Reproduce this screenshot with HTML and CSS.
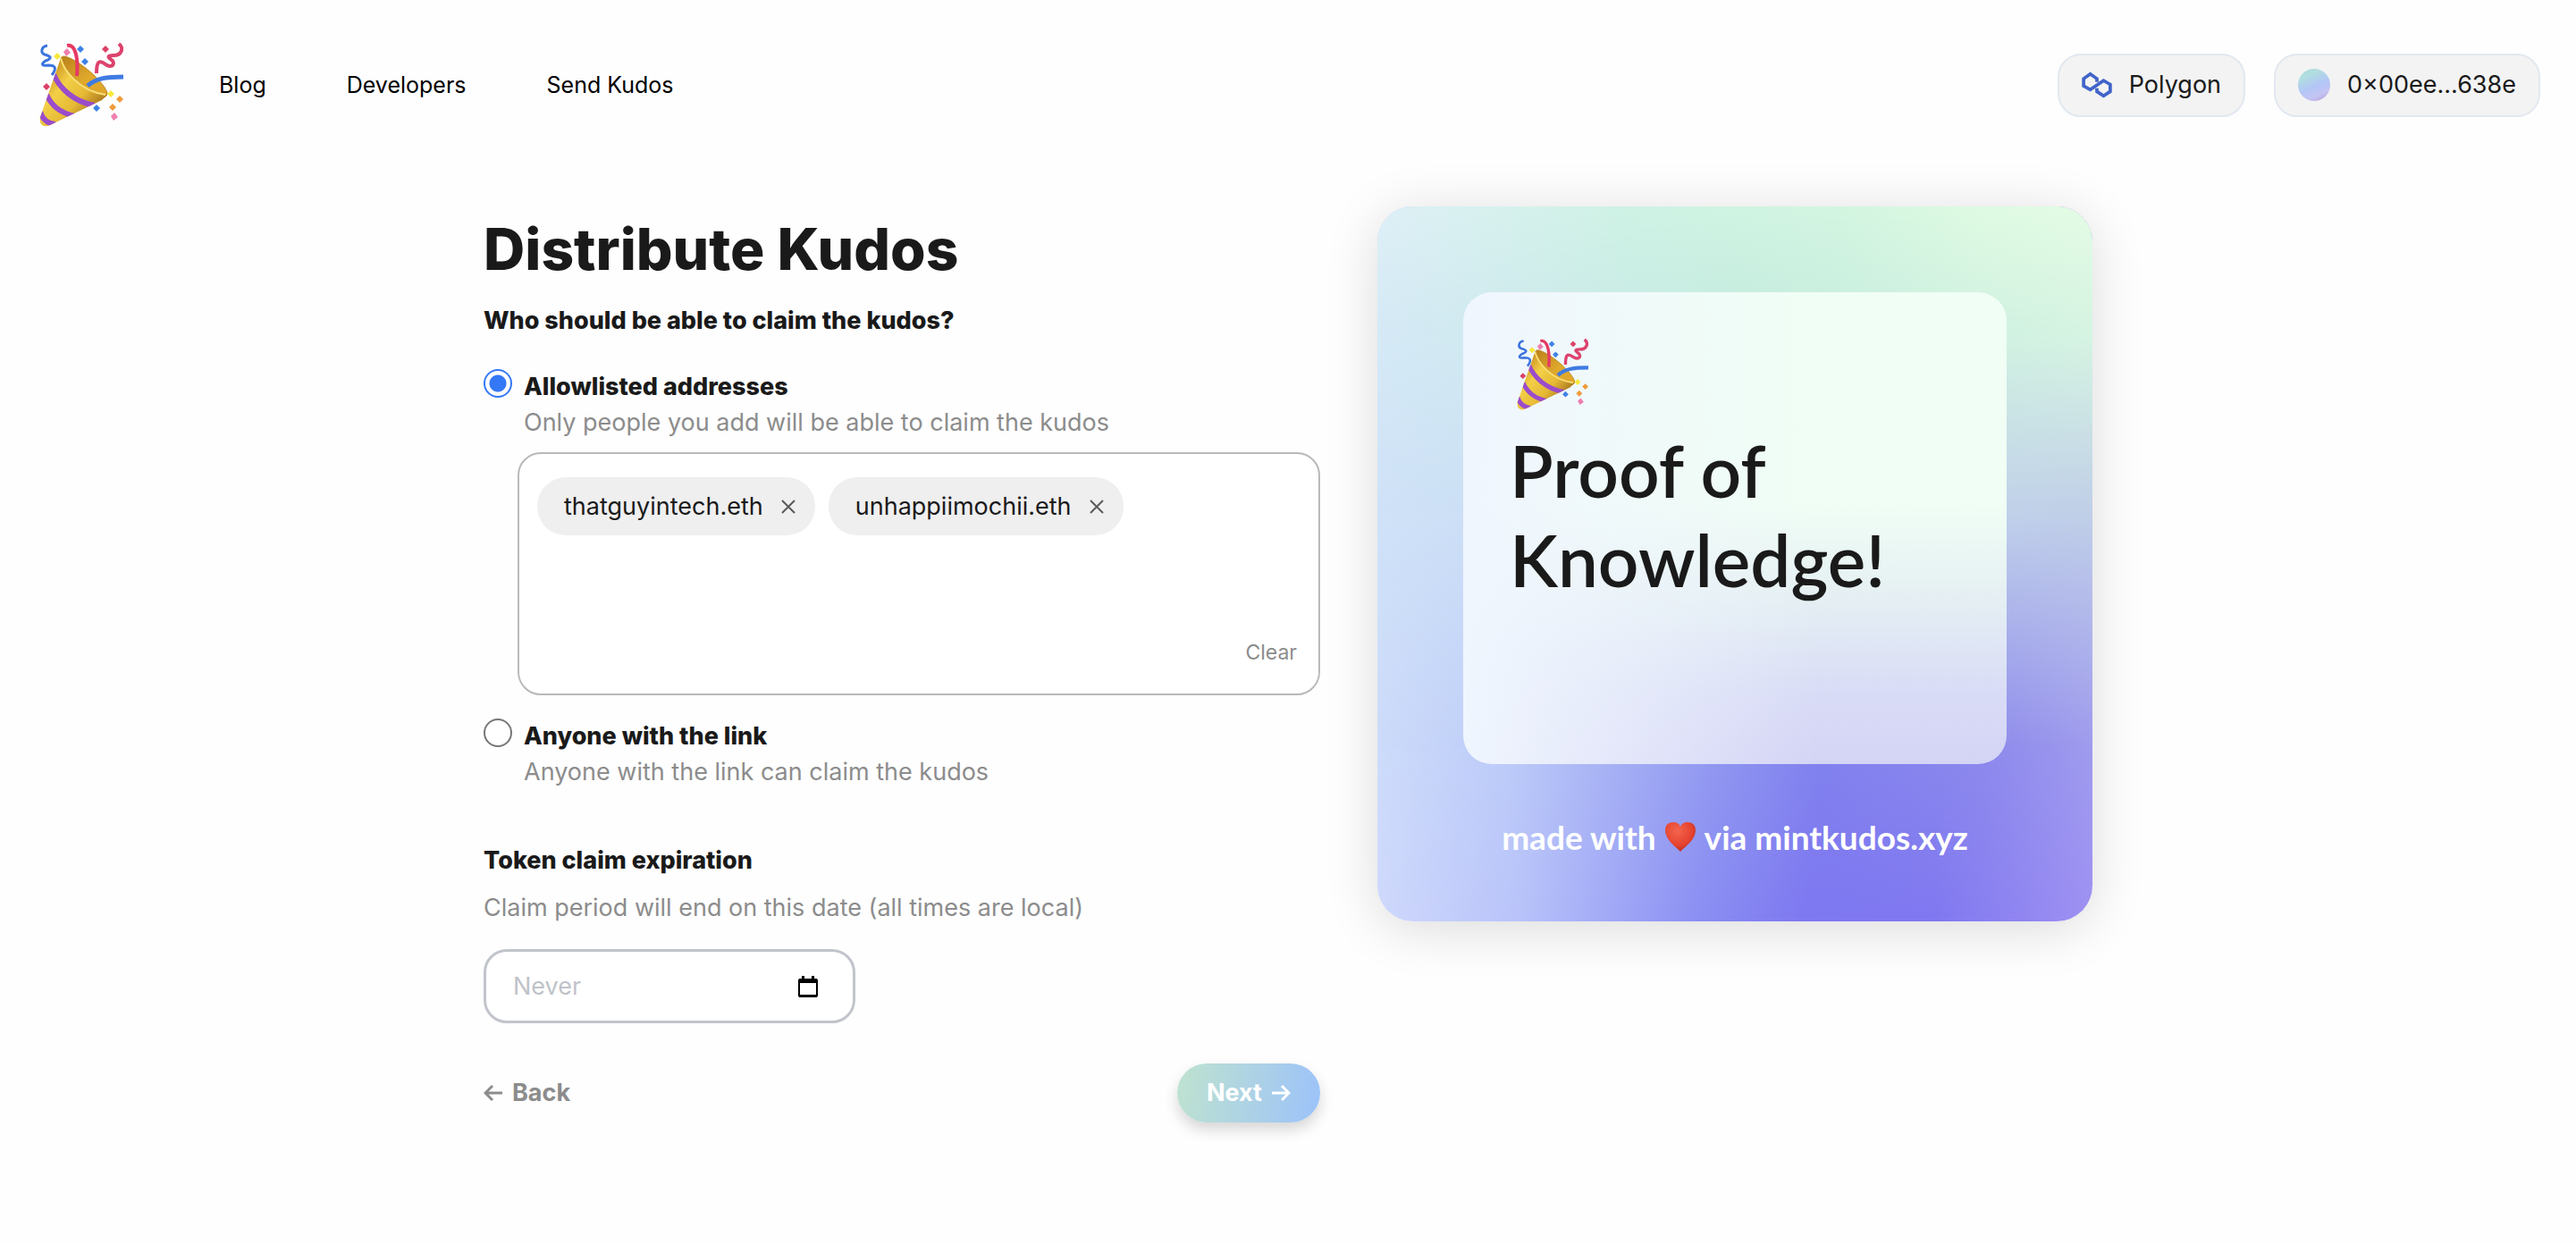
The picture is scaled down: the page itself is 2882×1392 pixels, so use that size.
FILE: index.html
```html
<!DOCTYPE html>
<html lang="en">
<head>
<meta charset="utf-8">
<title>Distribute Kudos</title>
<meta name="viewport" content="width=device-width, initial-scale=1">
<link rel="stylesheet" href="styles.css">
</head>
<body>
<svg class="sprite" aria-hidden="true">
  <defs>
    <linearGradient id="gold" x1="0" y1=".3" x2=".8" y2="1">
      <stop offset="0" stop-color="#c98a1c"/><stop offset=".3" stop-color="#f3cf48"/><stop offset=".6" stop-color="#e6b935"/><stop offset="1" stop-color="#8f5a14"/>
    </linearGradient>
    <linearGradient id="mouth" x1="0" y1="0" x2="1" y2="1">
      <stop offset="0" stop-color="#b9801a"/><stop offset=".55" stop-color="#dfa92c"/><stop offset="1" stop-color="#e0a62c"/>
    </linearGradient>
    <clipPath id="cone"><path d="M24 17C27 31 45 54 76 58L70 64L12 92Q6 95 2 91Q0 88 1 83Z"/></clipPath>
    <symbol id="popper" viewBox="0 0 94 94">
      <path d="M24 17Q26 13 34 17C50 24 73 45 76 56Q76 60 72 61C50 58 26 38 24 17Z" fill="url(#mouth)" stroke="#bd8417"/>
      <path d="M24 17C27 31 45 54 76 58L70 64L12 92Q6 95 2 91Q0 88 1 83Z" fill="url(#gold)"/>
      <g clip-path="url(#cone)" fill="none" stroke="#9a4ccb" stroke-width="6">
        <path d="M16 35C22 50 38 66 62 70"/>
        <path d="M8 58C14 70 22 78 40 82"/>
        <path d="M1 77C3 84 8 90 18 91"/>
      </g>
      <path d="M24 17C27 31 45 54 74 58" fill="none" stroke="#f9df78" stroke-width="2"/>
      <path d="M31 3C39 1 44 13 42 37" fill="none" stroke="#e63a63" stroke-width="4"/>
      <path d="M54 48C64 39 76 38 94 38" fill="none" stroke="#3f7be2" stroke-width="5"/>
      <path d="M9 3C2 4 1 11 6 13C13 15 15 17 7 20C1 24 3 26 10 25C18 25 20 28 14 36" fill="none" stroke="#3b74dd" stroke-width="3"/>
      <path d="M89 1C95 6 92 14 83 14C74 14 78 17 82 20C85 25 80 28 74 24C66 18 64 22 64 34" fill="none" stroke="#dd426d" stroke-width="4"/>
      <g fill="#3f82e6"><path d="M46 3l4 4-4 4-4-4z"/><path d="M51 17l4 4-4 4-4-4z"/><path d="M64 69l4 4-4 4-4-4z"/></g>
      <g fill="#ee7faf"><path d="M31 6l4 5-5 4-3-5z"/><path d="M84 78l4 5-5 4-3-5z"/></g>
      <g fill="#dc4167"><path d="M74 3l4 4-4 4-4-4z"/><path d="M8 45l4 4-4 4-4-4z"/></g>
      <g fill="#f7e93c"><path d="M20 11l4 4-4 4-4-4z"/><path d="M80 53l4 4-4 4-4-4z"/></g>
      <g fill="#f09a3c"><path d="M90 59l4 4-4 4-4-4z"/><path d="M82 68l4 4-4 4-4-4z"/></g>
    </symbol>
    <symbol id="cross" viewBox="0 0 16 16"><path d="M1 1L15 15M15 1L1 15" fill="none" stroke="#5a5a5a" stroke-width="2"/></symbol>
  </defs>
</svg>

<header class="topbar">
  <a class="logo" href="#" aria-label="Home"><svg class="logo-icon" aria-hidden="true"><use href="#popper"/></svg></a>
  <nav class="nav">
    <a href="#">Blog</a>
    <a href="#">Developers</a>
    <a href="#">Send Kudos</a>
  </nav>
  <div class="account">
    <button class="pill" type="button">
      <svg class="chain-icon" viewBox="0 0 32 28" aria-hidden="true"><path d="M16 11V7.500L9 2.500L2 7.500V15L9 19L23 9.500L30 13.500V21L23 25.500L16 21V17.500" fill="none" stroke="#4164c9" stroke-width="3.500"/></svg>
      Polygon
    </button>
    <button class="pill" type="button"><span class="avatar"></span>0×00ee...638e</button>
  </div>
</header>

<main class="page">
  <form class="form">
    <h1>Distribute Kudos</h1>
    <fieldset class="audience">
      <legend class="question">Who should be able to claim the kudos?</legend>
      <div class="option">
        <input class="radio" type="radio" name="audience" id="allowlist" checked>
        <div class="option-text">
          <label class="strong" for="allowlist">Allowlisted addresses</label>
          <p class="hint">Only people you add will be able to claim the kudos</p>
        </div>
      </div>
      <div class="addresses">
        <ul class="chips">
          <li class="chip">thatguyintech.eth<button class="remove" type="button" aria-label="Remove thatguyintech.eth"><svg aria-hidden="true"><use href="#cross"/></svg></button></li>
          <li class="chip">unhappiimochii.eth<button class="remove" type="button" aria-label="Remove unhappiimochii.eth"><svg aria-hidden="true"><use href="#cross"/></svg></button></li>
        </ul>
        <button class="clear" type="button">Clear</button>
      </div>
      <div class="option">
        <input class="radio" type="radio" name="audience" id="anyone">
        <div class="option-text">
          <label class="strong" for="anyone">Anyone with the link</label>
          <p class="hint">Anyone with the link can claim the kudos</p>
        </div>
      </div>
    </fieldset>

    <div class="expiration">
      <label class="strong" for="expires">Token claim expiration</label>
      <p class="hint">Claim period will end on this date (all times are local)</p>
      <div class="date">
        <input id="expires" type="text" placeholder="Never">
        <svg class="calendar" viewBox="0 0 22 24" aria-hidden="true"><path d="M4 0h3v3h8V0h3v3h2q2 0 2 2v17q0 2-2 2H2q-2 0-2-2V5q0-2 2-2h2zM2 8v13h18V8z" fill="#000" fill-rule="evenodd"/></svg>
      </div>
    </div>

    <div class="actions">
      <button class="back" type="button"><svg class="arrow" viewBox="0 0 22 20" aria-hidden="true"><path d="M21 10H3M10 2L2 10L10 18"/></svg>Back</button>
      <button class="next" type="submit">Next<svg class="arrow" viewBox="0 0 22 20" aria-hidden="true"><path d="M1 10H19M12 2L20 10L12 18"/></svg></button>
    </div>
  </form>

  <section class="art">
    <svg class="wash" viewBox="0 0 800 800" preserveAspectRatio="none" aria-hidden="true">
      <defs>
        <linearGradient id="r0"><stop offset="0" stop-color="#deeff6"/><stop offset=".35" stop-color="#cef2e4"/><stop offset=".65" stop-color="#d2f5e0"/><stop offset=".85" stop-color="#dffae2"/><stop offset="1" stop-color="#e3fbe5"/></linearGradient>
        <linearGradient id="r1"><stop offset="0" stop-color="#d5e9f6"/><stop offset=".5" stop-color="#c3ebdf"/><stop offset="1" stop-color="#d6f4e2"/></linearGradient>
        <linearGradient id="r2"><stop offset="0" stop-color="#cfe2f8"/><stop offset=".5" stop-color="#c4d6ee"/><stop offset="1" stop-color="#c0cfe8"/></linearGradient>
        <linearGradient id="r3"><stop offset="0" stop-color="#cddbfa"/><stop offset=".18" stop-color="#bccbf8"/><stop offset=".5" stop-color="#8d93ef"/><stop offset=".62" stop-color="#8181ee"/><stop offset=".85" stop-color="#8c89ec"/><stop offset="1" stop-color="#9f9bee"/></linearGradient>
        <linearGradient id="r4"><stop offset="0" stop-color="#cfd9fc"/><stop offset=".2" stop-color="#b9c3fa"/><stop offset=".45" stop-color="#8b8ff3"/><stop offset=".6" stop-color="#7e78f1"/><stop offset=".78" stop-color="#8078f1"/><stop offset="1" stop-color="#9f91f3"/></linearGradient>
        <linearGradient id="f1" x2="0" y2="1"><stop offset="0" stop-color="#fff"/><stop offset=".18" stop-color="#000"/></linearGradient>
        <linearGradient id="f2" x2="0" y2="1"><stop offset=".18" stop-color="#fff"/><stop offset=".43" stop-color="#000"/></linearGradient>
        <linearGradient id="f3" x2="0" y2="1"><stop offset=".43" stop-color="#fff"/><stop offset=".76" stop-color="#000"/></linearGradient>
        <linearGradient id="f4" x2="0" y2="1"><stop offset=".76" stop-color="#fff"/><stop offset="1" stop-color="#000"/></linearGradient>
        <mask id="m1"><rect width="800" height="800" fill="url(#f1)"/></mask>
        <mask id="m2"><rect width="800" height="800" fill="url(#f2)"/></mask>
        <mask id="m3"><rect width="800" height="800" fill="url(#f3)"/></mask>
        <mask id="m4"><rect width="800" height="800" fill="url(#f4)"/></mask>
      </defs>
      <rect width="800" height="800" fill="url(#r4)"/>
      <rect width="800" height="800" fill="url(#r3)" mask="url(#m4)"/>
      <rect width="800" height="800" fill="url(#r2)" mask="url(#m3)"/>
      <rect width="800" height="800" fill="url(#r1)" mask="url(#m2)"/>
      <rect width="800" height="800" fill="url(#r0)" mask="url(#m1)"/>
    </svg>
    <div class="plaque">
      <svg class="plaque-icon" aria-hidden="true"><use href="#popper"/></svg>
      <h2>Proof of Knowledge!</h2>
    </div>
    <p class="credit">made with
      <svg class="heart" viewBox="0 0 34 34" role="img" aria-label="love"><defs><radialGradient id="red" cx=".4" cy=".3" r=".8"><stop offset="0" stop-color="#f3654f"/><stop offset=".6" stop-color="#e5432f"/><stop offset="1" stop-color="#b22a1e"/></radialGradient></defs><path d="M17 33C10 26 0 19 0 9C0 3 4 0 9 0C13 0 16 2 17 5C18 2 21 0 25 0C30 0 34 3 34 9C34 19 24 26 17 33Z" fill="url(#red)"/></svg>
      via mintkudos.xyz</p>
  </section>
</main>
</body>
</html>
```
FILE: styles.css
```css
* { box-sizing: border-box; }
body { margin: 0; background: #fefefe; color: #1a1a1a; font: 400 27px/40px Inter, "Liberation Sans", sans-serif; }
button, input { font: inherit; color: inherit; }
button { border: 0; background: none; padding: 0; cursor: pointer; }
h1, h2, p, ul, fieldset, legend { margin: 0; padding: 0; border: 0; }
.sprite { position: absolute; width: 0; height: 0; }

.topbar { display: flex; align-items: center; padding: 48px 40px 48px 44px; }
.logo, .logo-icon { display: block; width: 94px; height: 94px; }
.nav { display: flex; gap: 90px; margin-left: 107px; font-size: 25px; }
.nav a { color: #000; text-decoration: none; }
.account { display: flex; gap: 32px; margin-left: auto; }
.pill { display: flex; align-items: center; gap: 19px; height: 71px; padding: 0 25px; border: 2px solid #e2e8f0; border-radius: 26px; background: #f3f3f3; }
.chain-icon { width: 34px; height: 30px; }
.avatar { width: 36px; height: 36px; border-radius: 50%; background: linear-gradient(155deg, #a9d3e4 0%, #b1dfdf 22%, #b3c5f7 55%, #c3c5f2 75%, #b99bdc 100%); }

.page { display: grid; grid-template-columns: minmax(0, 936px) 800px; gap: 64px; justify-content: center; align-items: start; padding: 41px 40px 100px; }
.form { padding-top: 16px; }
h1 { font-size: 64px; line-height: 64px; font-weight: 800; }
.question, .strong { font-weight: 800; }
.hint { color: #8c8c8c; }
.audience { margin-top: 28px; }
.option { display: flex; gap: 13px; }
.radio { appearance: none; flex: none; width: 32px; height: 32px; margin: 0; border: 2px solid #767676; border-radius: 50%; background: #fff; }
.radio:checked { border-color: #3478f6; background: radial-gradient(circle, #3478f6 9px, #fff 10px); }
.audience .option:first-of-type { margin-top: 34px; }
.addresses { display: flex; flex-direction: column; justify-content: space-between; min-height: 272px; margin: 13px 0 26px 38px; padding: 26px 24px 26px 20px; border: 2px solid #b9b9b9; border-radius: 26px; background: #fff; }
.chips { display: flex; flex-wrap: wrap; gap: 15px; list-style: none; }
.chip { display: flex; align-items: center; gap: 20px; height: 65px; padding: 0 22px 0 30px; border-radius: 32px; background: #efefef; }
.remove, .remove svg { display: block; width: 16px; height: 16px; }
.clear { align-self: flex-end; color: #8c8c8c; font-size: 23px; }
.expiration { margin-top: 59px; }
.expiration .hint { margin-top: 13px; }
.date { display: flex; align-items: center; width: 416px; max-width: 100%; height: 83px; margin-top: 26px; padding: 0 39px 0 30px; border: 3px solid #c1c4cb; border-radius: 26px; background: #fff; }
.date input { flex: 1; min-width: 0; padding: 0; border: 0; outline: 0; background: none; }
.date input::placeholder { color: #bfc2c9; opacity: 1; }
.calendar { width: 22px; height: 24px; }
.actions { display: flex; align-items: center; justify-content: space-between; margin-top: 45px; font-weight: 700; }
.back, .next { display: flex; align-items: center; gap: 10px; }
.back { color: #8c8c8c; }
.next { height: 66px; padding: 0 33px; border-radius: 33px; color: #fff; background: linear-gradient(100deg, #bfe3cf, #9cc2fa); box-shadow: 0 8px 16px rgba(0, 0, 0, .16); }
.arrow { width: 22px; height: 20px; fill: none; stroke: currentColor; stroke-width: 3; }

.art { position: relative; display: flex; flex-direction: column; align-items: center; aspect-ratio: 1; padding: 96px 96px 0; overflow: hidden; border-radius: 40px; box-shadow: 0 8px 60px rgba(0, 0, 0, .14); }
.wash { position: absolute; inset: 0; width: 100%; height: 100%; }
.plaque { position: relative; flex: none; align-self: stretch; height: 528px; padding: 52px; border-radius: 32px; background: linear-gradient(to right, #f0f6fe, rgba(240, 247, 254, 0) 65%), linear-gradient(to bottom, #f0fef5 45%, #e5eff3 65%, #d9dcf6 85%, #d4d4f5); }
.plaque-icon { display: block; width: 80px; height: 80px; margin-left: 8px; }
h2 { margin-top: 17px; font: 600 80px/100px Lato, Inter, sans-serif; }
.credit { position: relative; display: flex; align-items: center; gap: 10px; margin-top: 62px; color: #fff; font: 700 37px/40px Lato, Inter, sans-serif; }
.heart { width: 34px; height: 34px; }
```
